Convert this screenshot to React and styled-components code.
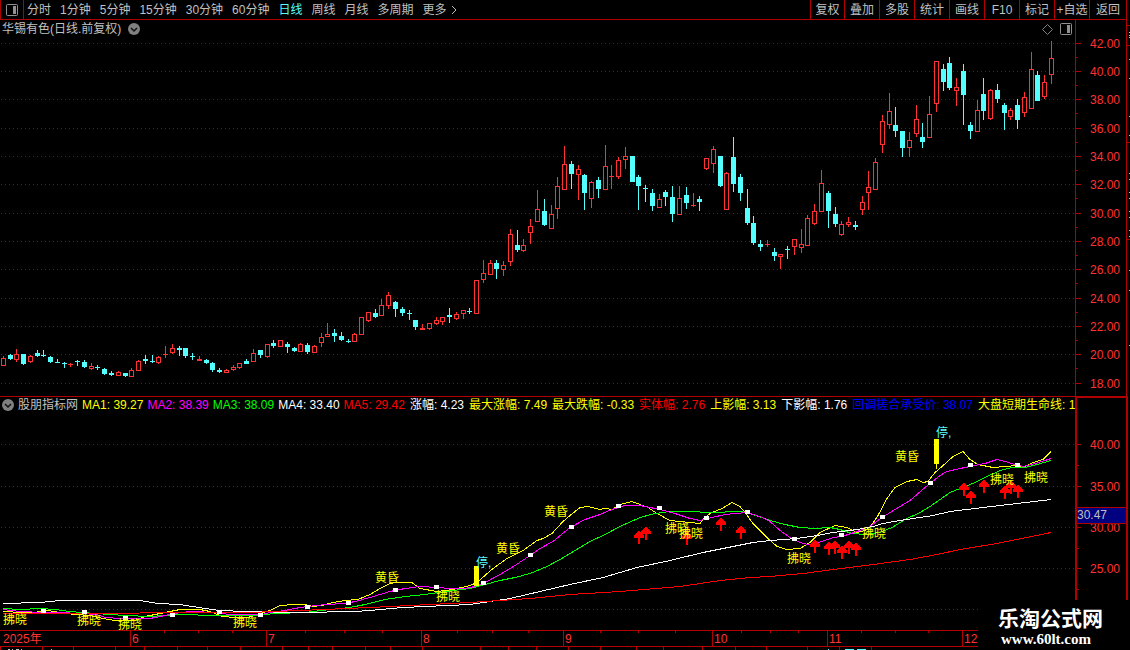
import { useState } from 'react';
import styled, { createGlobalStyle } from 'styled-components';

const RED = '#ff3232';
const CYAN = '#54ffff';
const LINE = '#b00000';

const periods = ['分时', '1分钟', '5分钟', '15分钟', '30分钟', '60分钟', '日线', '周线', '月线', '多周期'];
const tools = ['复权', '叠加', '多股', '统计', '画线', 'F10', '标记', '+自选', '返回'];

// direction (1 up, 0 down), high, body top, body bottom, low
const candles = [
  [1, 356, 358, 366, 366], [0, 354, 355, 359, 360], [1, 349, 354, 360, 362], [0, 354, 354, 364, 365],
  [1, 355, 356, 362, 363], [0, 350, 353, 356, 357], [0, 350, 355, 356, 357], [0, 356, 357, 362, 363],
  [0, 359, 362, 363, 363], [0, 362, 363, 364, 368], [1, 363, 364, 365, 367], [0, 360, 361, 362, 366],
  [0, 360, 362, 367, 368], [1, 363, 366, 369, 370], [0, 365, 367, 368, 370], [0, 368, 369, 374, 375],
  [0, 371, 373, 375, 376], [1, 371, 372, 376, 376], [0, 373, 373, 376, 377], [1, 368, 370, 377, 377],
  [1, 360, 361, 371, 371], [0, 355, 359, 361, 364], [0, 355, 361, 362, 363], [1, 356, 357, 363, 364],
  [1, 346, 354, 355, 358], [1, 344, 348, 353, 354], [0, 346, 348, 350, 356], [0, 348, 348, 356, 358],
  [0, 353, 356, 357, 360], [1, 356, 359, 361, 361], [0, 359, 360, 363, 364], [0, 362, 363, 370, 372],
  [0, 368, 370, 372, 373], [1, 369, 370, 373, 373], [1, 365, 367, 370, 371], [1, 363, 363, 368, 369],
  [0, 359, 361, 364, 364], [1, 349, 353, 362, 362], [0, 350, 350, 355, 358], [1, 344, 344, 357, 358],
  [0, 340, 343, 346, 348], [1, 340, 340, 347, 347], [0, 342, 344, 347, 353], [0, 347, 348, 351, 352],
  [1, 343, 344, 352, 352], [0, 343, 345, 352, 354], [1, 345, 346, 353, 353], [1, 333, 337, 343, 347],
  [1, 323, 334, 337, 337], [0, 329, 333, 336, 342], [0, 332, 336, 340, 341], [0, 339, 341, 342, 343],
  [1, 333, 334, 342, 342], [1, 317, 317, 335, 335], [1, 312, 312, 321, 322], [0, 309, 313, 317, 318],
  [1, 299, 305, 316, 316], [1, 292, 295, 306, 309], [0, 301, 302, 309, 317], [0, 307, 309, 313, 316],
  [0, 310, 313, 314, 320], [0, 320, 320, 327, 330], [1, 324, 328, 330, 330], [1, 323, 323, 329, 330],
  [1, 317, 320, 324, 325], [1, 317, 317, 322, 325], [0, 308, 315, 317, 323], [1, 312, 314, 319, 320],
  [1, 310, 310, 314, 319], [0, 308, 311, 312, 314], [1, 280, 280, 314, 314], [1, 260, 273, 280, 283],
  [1, 260, 263, 275, 275], [0, 260, 263, 269, 279], [1, 261, 265, 270, 276], [1, 229, 234, 262, 266],
  [0, 230, 245, 250, 252], [1, 239, 245, 251, 252], [1, 219, 226, 233, 244], [1, 190, 209, 222, 222],
  [0, 199, 211, 225, 226], [1, 205, 214, 229, 229], [1, 177, 186, 209, 219], [1, 146, 164, 190, 190],
  [0, 161, 164, 174, 189], [1, 165, 169, 175, 200], [0, 174, 175, 193, 210], [1, 181, 182, 199, 208],
  [0, 177, 180, 189, 198], [1, 145, 166, 190, 190], [1, 165, 176, 177, 189], [1, 157, 160, 177, 179],
  [1, 147, 156, 160, 169], [0, 156, 156, 182, 182], [0, 175, 177, 186, 210], [0, 185, 188, 189, 202],
  [0, 189, 193, 206, 211], [1, 194, 199, 208, 208], [0, 190, 192, 197, 206], [0, 186, 197, 214, 222],
  [1, 186, 198, 215, 215], [0, 187, 195, 203, 209], [1, 193, 205, 206, 207], [0, 196, 199, 202, 211],
  [1, 158, 158, 169, 170], [1, 146, 149, 164, 173], [0, 156, 156, 186, 187], [1, 172, 173, 210, 210],
  [0, 137, 157, 184, 192], [0, 174, 177, 193, 201], [0, 189, 208, 223, 225], [0, 216, 223, 243, 245],
  [0, 240, 244, 247, 251], [1, 240, 244, 245, 247], [0, 248, 252, 256, 261], [1, 254, 254, 257, 269],
  [0, 246, 249, 250, 259], [1, 239, 239, 247, 255], [1, 229, 244, 248, 253], [1, 215, 218, 246, 246],
  [1, 204, 211, 224, 225], [1, 170, 183, 212, 212], [0, 191, 193, 211, 228], [0, 207, 214, 224, 227],
  [1, 221, 224, 235, 236], [1, 217, 222, 225, 227], [0, 221, 225, 227, 230], [1, 196, 202, 210, 215],
  [1, 171, 187, 193, 210], [1, 158, 162, 190, 190], [1, 115, 121, 145, 153], [1, 93, 111, 125, 129],
  [0, 107, 125, 131, 137], [0, 131, 131, 148, 157], [1, 132, 140, 148, 157], [1, 105, 119, 134, 137],
  [0, 123, 137, 142, 148], [1, 96, 114, 138, 138], [1, 61, 61, 104, 112], [0, 64, 69, 82, 91],
  [0, 57, 63, 88, 90], [1, 78, 87, 91, 106], [0, 64, 71, 95, 125], [0, 122, 125, 131, 139],
  [1, 100, 110, 132, 132], [0, 78, 94, 111, 120], [1, 89, 90, 119, 120], [0, 84, 90, 99, 103],
  [0, 103, 105, 113, 130], [1, 108, 110, 117, 120], [0, 99, 105, 120, 129], [1, 92, 97, 113, 117],
  [1, 52, 69, 109, 109], [0, 71, 75, 101, 101], [1, 75, 82, 97, 99], [1, 41, 58, 75, 84],
];

const priceGrid = [43, 71, 99, 128, 156, 184, 213, 241, 269, 298, 326, 354, 383];
const indicatorGrid = [444, 486, 527, 568, 609];

const legend = [
  ['MA1', '39.27', '#ffff00'],
  ['MA2', '38.39', '#ff00ff'],
  ['MA3', '38.09', '#00ff00'],
  ['MA4', '33.40', '#ffffff'],
  ['MA5', '29.42', '#ff0000'],
  ['涨幅', '4.23', '#ffffff'],
  ['最大涨幅', '7.49', '#ffff00'],
  ['最大跌幅', '-0.33', '#ffff00'],
  ['实体幅', '2.76', '#ff0000'],
  ['上影幅', '3.13', '#ffff00'],
  ['下影幅', '1.76', '#ffffff'],
  ['回调搓合承受价', '38.07', '#0000ff'],
  ['大盘短期生命线', '11.52', '#ffff00'],
];

const averages = [
  {
    color: '#ffff00',
    points: '3,611 22,612 34,612 48,610 60,612 75,614 90,615 103,618 115,620 135,620 145,616 160,613 170,611 180,609 200,609 210,611 222,616 235,617 248,617 260,613 270,610 280,605 295,604 305,604 313,606 322,605 333,602 345,600 358,599 370,594 380,588 390,583 397,582 412,582 420,588 437,591 453,589 470,585 477,582 493,568 507,558 523,550 537,540 543,538 552,533 563,521 570,515 580,507 588,506 600,509 605,508 612,509 620,504 632,501 640,504 648,507 657,513 670,520 680,521 700,523 703,519 710,513 722,508 732,502 740,506 745,512 753,523 767,537 777,546 787,549 800,548 810,542 820,532 835,525 847,527 857,532 865,530 872,524 878,515 887,498 895,487 907,481 917,479 923,482 928,481 935,472 942,466 953,456 963,451 970,459 978,464 993,467 1017,465 1023,467 1033,462 1043,459 1051,451',
  },
  {
    color: '#00ff00',
    points: '3,608 20,609 40,608 55,609 70,611 95,613 125,615 150,616 165,615 185,614 210,615 235,615 255,615 275,613 305,612 330,609 350,607 365,604 385,599 405,596 425,594 445,591 470,588 485,584 500,580 515,577 530,573 547,566 560,559 575,550 590,541 605,534 620,526 640,517 655,513 670,511 690,511 710,512 740,511 750,513 770,520 785,524 800,527 815,528 830,527 840,529 852,533 865,534 880,532 892,527 905,519 920,512 930,506 940,499 950,492 965,486 975,482 985,477 1000,470 1012,467 1025,467 1037,464 1051,460',
  },
  {
    color: '#ff00ff',
    points: '3,609 20,611 43,612 60,612 80,613 97,614 105,617 120,618 150,618 165,615 180,612 192,611 215,612 230,614 262,614 270,612 285,610 300,607 325,604 345,603 355,601 370,597 390,591 405,588 420,586 437,587 450,588 465,588 475,586 485,582 500,574 515,565 530,555 540,548 553,541 570,527 585,519 600,514 612,509 625,505 640,505 660,509 675,513 690,518 700,520 712,517 725,514 747,512 760,516 770,521 780,530 790,537 800,542 808,544 816,543 830,538 845,535 860,530 870,526 882,517 895,509 910,500 925,487 930,483 940,475 947,471 960,468 970,466 985,463 997,459 1005,461 1015,464 1023,466 1035,463 1045,460 1051,458',
  },
  {
    color: '#ffffff',
    points: '3,603 40,602 60,600 140,600 158,603 180,604 205,608 220,610 245,611 300,612 355,611 370,610 403,607 470,604 510,598 540,591 570,584 603,577 637,567 670,560 703,552 753,542 770,540 797,538 817,535 833,532 857,529 873,526 883,523 900,520 933,515 950,511 983,507 1017,503 1051,499',
  },
  {
    color: '#ff0000',
    points: '3,613 100,613 180,612 250,612 300,610 370,607 410,605 470,602 530,598 570,594 620,591 680,586 720,580 750,577 770,576 803,573 833,569 873,564 910,559 937,554 960,549 997,543 1051,532',
  },
];

const markers = [
  [43, 611], [84, 612], [125, 618], [172, 615], [219, 612], [260, 615], [307, 607], [348, 603], [395, 590],
  [436, 587], [483, 583], [530, 555], [571, 527], [618, 506], [659, 508], [706, 518], [747, 512], [794, 539],
  [841, 535], [882, 517], [930, 483], [970, 465], [1017, 465],
];

const signals = [
  ['黄昏', 375, 577], ['黄昏', 496, 548], ['黄昏', 544, 511], ['黄昏', 895, 456],
  ['拂晓', 3, 619], ['拂晓', 77, 620], ['拂晓', 118, 624], ['拂晓', 233, 622], ['拂晓', 436, 596],
  ['拂晓', 665, 528], ['拂晓', 679, 533], ['拂晓', 787, 558], ['拂晓', 862, 533], ['拂晓', 990, 479],
  ['拂晓', 1024, 477],
];

const arrows = [
  [638, 532], [645, 528], [686, 533], [720, 519], [740, 527], [814, 541], [828, 543], [834, 542], [841, 547],
  [848, 542], [855, 544], [963, 484], [970, 492], [983, 481], [1004, 487], [1010, 482], [1017, 486],
];

const months = [['2025年', 1], ['6', 130], ['7', 266], ['8', 421], ['9', 563], ['10', 712], ['11', 827], ['12', 962]];
const weekTicks = [164, 198, 232, 305, 344, 382, 457, 492, 528, 600, 638, 675, 741, 770, 798, 861, 895, 928];
const lowerTicks = [0, 42, 73, 115, 144, 177, 207, 240, 282, 308, 332, 365, 390, 422, 480, 508, 536, 568, 600, 636, 663, 702, 735, 766, 807, 839, 871];
const sideMarks = [32, 35, 37, 59, 78, 116, 135, 173, 179, 192, 198, 211, 217, 230, 236, 270, 290, 345];

function CollapseIcon() {
  return (
    <svg width="12" height="12" viewBox="0 0 12 12" aria-hidden="true">
      <circle cx="6" cy="6" r="6" fill="#808080" />
      <path d="M3 5l3 3 3-3" fill="none" stroke="#101010" strokeWidth="1.5" />
    </svg>
  );
}

function PaneIcon() {
  return (
    <svg width="12" height="12" viewBox="0 0 12 12" aria-hidden="true">
      <rect x="0.5" y="0.5" width="11" height="11" rx="1" fill="none" stroke="#909090" />
      <rect x="7" y="2" width="3" height="8" fill="#909090" />
    </svg>
  );
}

function Candle({ index, data }) {
  const [up, high, top, bottom, low] = data;
  const x = Math.floor(3.3 + index * 6.762);
  const color = up ? RED : CYAN;

  if (!up || bottom - top < 3) {
    return (
      <g fill={color}>
        <rect x={x} y={high} width="1" height={low - high} />
        <rect x={x - 2} y={top} width="5" height={bottom - top} />
      </g>
    );
  }

  return (
    <g>
      <rect x={x} y={high} width="1" height={top - high} fill={color} />
      <rect x={x} y={bottom} width="1" height={low - bottom} fill={color} />
      <rect x={x - 1.5} y={top + 0.5} width="4" height={bottom - top - 1} fill="#000" stroke={color} />
    </g>
  );
}

function Grid({ rows }) {
  return rows.map(y => (
    <line key={y} x1="1" x2="1075" y1={y + 0.5} y2={y + 0.5} stroke="#a00000" strokeDasharray="1 3" />
  ));
}

function PriceChart() {
  return (
    <Chart viewBox="0 38 1126 358" role="img" aria-label="日线">
      <g shapeRendering="crispEdges">
        <Grid rows={priceGrid} />
        {candles.map((data, i) => <Candle key={i} index={i} data={data} />)}
        <rect x="1075" y="38" width="1" height="358" fill={LINE} />
        {priceGrid.map(y => <rect key={y} x="1076" y={y} width="5" height="1" fill={LINE} />)}
        {priceGrid.slice(0, -1).map(y => <rect key={y} x="1076" y={y + 14} width="2" height="1" fill={LINE} />)}
      </g>
      {priceGrid.map((y, i) => (
        <text key={y} x="1090" y={y + 5} fill={RED}>{(42 - i * 2).toFixed(2)}</text>
      ))}
    </Chart>
  );
}

function IndicatorChart() {
  return (
    <Chart viewBox="0 413 1126 217" role="img" aria-label="股朋指标网">
      <g shapeRendering="crispEdges">
        <Grid rows={indicatorGrid} />
        {averages.map(({ color, points }) => (
          <polyline key={color} points={points} fill="none" stroke={color} transform="translate(0 0.5)" />
        ))}
        <path d="M474 566h5v20h-5zM934 439h5v25h-5zM936 464h1v5h-1z" fill="#ffff00" />
        {markers.map(([x, y]) => <rect key={x} x={x - 2} y={y - 2} width="5" height="4" fill="#fff" />)}
        {arrows.map(([x, y]) => (
          <path key={x} d={`M${x} ${y - 1}h2l4 5v2h-4v6h-2v-6h-4v-2z`} fill="#ff0000" />
        ))}
        <rect x="1075" y="413" width="2" height="217" fill={LINE} />
        {indicatorGrid.map(y => <rect key={y} x="1077" y={y} width="4" height="1" fill={LINE} />)}
        {indicatorGrid.map(y => <rect key={y} x="1077" y={y + 21} width="2" height="1" fill={LINE} />)}
      </g>
      {signals.map(([label, x, y]) => (
        <text key={x} x={x} y={y + 5} fill="#ffff00">{label}</text>
      ))}
      <text x="476" y="567" fill={CYAN}>停,</text>
      <text x="936" y="437" fill={CYAN}>停,</text>
      {indicatorGrid.slice(0, 4).map((y, i) => (
        <text key={y} x="1090" y={y + 5} fill={RED}>{(40 - i * 5).toFixed(2)}</text>
      ))}
      <rect x="1077" y="507" width="49" height="17" fill={LINE} />
      <rect x="1077" y="508" width="49" height="15" fill="#000080" />
      <text x="1077" y="519" fill="#c0c0c0">30.47</text>
    </Chart>
  );
}

function TimeAxis() {
  return (
    <Chart viewBox="0 630 1126 20" role="img" aria-label="2025年">
      <g shapeRendering="crispEdges" fill={LINE}>
        <rect x="0" y="630" width="1126" height="1" />
        <rect x="0" y="646" width="1126" height="1" />
        {months.slice(1).map(([label, x]) => <rect key={label} x={x} y="630" width="1" height="16" />)}
        {weekTicks.map(x => <rect key={x} x={x} y="631" width="1" height="2" />)}
        {lowerTicks.map(x => <rect key={x} x={x} y="647" width="1" height="3" />)}
        <path d="M8 649h2v1h-2zM12 649h1v1h-1zM16 649h3v1h-3zM21 649h1v1h-1zM51 649h1v1h-1z" fill="#c0c0c0" />
        <path d="M828 649h1v1h-1zM845 649h9v1h-9zM857 649h9v1h-9z" fill={CYAN} />
      </g>
      {months.map(([label, x]) => (
        <text key={label} x={x + 2} y="643" fill={RED}>{label}</text>
      ))}
    </Chart>
  );
}

export default function App() {
  const [period, setPeriod] = useState('日线');

  return (
    <Page>
      <GlobalStyle />
      <Row>
        <Toolbar>
          <PaneButton aria-label="侧栏"><PaneIcon /></PaneButton>
          <Periods>
            {periods.map(name => (
              <PeriodButton key={name} $active={name === period} onClick={() => setPeriod(name)}>{name}</PeriodButton>
            ))}
            <PeriodButton>
              更多
              <svg width="6" height="10" viewBox="0 0 6 10" aria-hidden="true">
                <path d="M1 1l4 4-4 4" fill="none" stroke="currentColor" />
              </svg>
            </PeriodButton>
          </Periods>
          <Tools>
            {tools.map(name => <ToolButton key={name}>{name}</ToolButton>)}
          </Tools>
        </Toolbar>
        <Gutter />
      </Row>

      <Row>
        <Panel>
          <PriceHeader>
            <Title>华锡有色(日线.前复权)</Title>
            <IconButton aria-label="展开"><CollapseIcon /></IconButton>
            <HeaderIcons>
              <svg width="11" height="11" viewBox="0 0 11 11" aria-hidden="true">
                <path d="M5.5 0.5l5 5-5 5-5-5z" fill="none" stroke="#808080" />
              </svg>
              <PaneIcon />
            </HeaderIcons>
            <AxisHead />
          </PriceHeader>
          <PriceChart />
        </Panel>
        <Gutter>
          <svg width="3" height="376" viewBox="0 20 3 376" shapeRendering="crispEdges" aria-hidden="true">
            {sideMarks.map(y => <rect key={y} x="2" y={y} width="1" height="1" fill="#c0c0c0" />)}
            {[25, 45, 142, 239].map(y => <rect key={y} x="0" y={y} width="3" height="1" fill={LINE} />)}
          </svg>
        </Gutter>
      </Row>

      <Row>
        <IndicatorPanel>
          <IndicatorHeader>
            <IconButton aria-label="收起"><CollapseIcon /></IconButton>
            <Legend>
              <LegendItem $color="#c0c0c0" $wide>股朋指标网</LegendItem>
              {legend.map(([name, value, color]) => (
                <LegendItem key={name} $color={color} $wide={!name.startsWith('MA')}>{name}: {value}</LegendItem>
              ))}
            </Legend>
            <AxisHead $heavy />
          </IndicatorHeader>
          <IndicatorChart />
          <TimeAxis />
        </IndicatorPanel>
        <Gutter $heavy />
      </Row>

      <Watermark>
        <strong>乐淘公式网</strong>
        <span>www.60lt.com</span>
      </Watermark>
    </Page>
  );
}

const GlobalStyle = createGlobalStyle`
  body {
    margin: 0;
    background: #000;
  }

  button {
    font: inherit;
    color: inherit;
    background: none;
    border: 0;
    padding: 0;
    cursor: pointer;
  }
`;

const Page = styled.div`
  position: relative;
  overflow: hidden;
  background: #000;
  color: #c0c0c0;
  font-family: 'Liberation Sans', 'Noto Sans CJK SC', sans-serif;
  font-size: 12px;
  line-height: 16px;
`;

const Row = styled.div`
  display: grid;
  grid-template-columns: minmax(0, 1fr) 4px;
`;

const Gutter = styled.div`
  box-sizing: border-box;
  border-left: ${({ $heavy }) => ($heavy ? 2 : 1)}px solid ${LINE};
  overflow: hidden;

  svg {
    display: block;
  }
`;

const Toolbar = styled.header`
  display: flex;
  height: 19px;
  border-bottom: 1px solid ${LINE};
  white-space: nowrap;
`;

const PaneButton = styled.button`
  box-sizing: border-box;
  width: 24px;
  display: flex;
  align-items: center;
  justify-content: center;
  border-left: 1px solid ${LINE};
  border-right: 1px solid ${LINE};
`;

const Periods = styled.nav`
  flex: 1;
  display: flex;
  align-items: center;
  gap: 9px;
  padding-left: 3px;
  overflow: hidden;
`;

const PeriodButton = styled.button`
  display: flex;
  align-items: center;
  gap: 4px;
  color: ${({ $active }) => ($active ? CYAN : '#c0c0c0')};
`;

const Tools = styled.div`
  display: flex;
`;

const ToolButton = styled.button`
  box-sizing: border-box;
  width: 35px;
  border-left: 1px solid ${LINE};

  &:first-child {
    width: 34px;
  }

  &:last-child {
    width: 37px;
  }
`;

const Panel = styled.section`
  min-width: 0;
`;

const IndicatorPanel = styled(Panel)`
  border-top: 1px solid ${LINE};
`;

const PriceHeader = styled.div`
  display: flex;
  align-items: center;
  height: 18px;
  padding-left: 2px;
  gap: 7px;
`;

const Title = styled.h1`
  margin: 0;
  font-size: 12px;
  font-weight: 400;
`;

const IconButton = styled.button`
  display: flex;
`;

const HeaderIcons = styled.div`
  display: flex;
  align-items: center;
  gap: 7px;
  margin-left: auto;
  margin-right: -4px;
`;

const AxisHead = styled.div`
  box-sizing: border-box;
  flex: none;
  align-self: stretch;
  width: 51px;
  border-left: ${({ $heavy }) => ($heavy ? 2 : 1)}px solid ${LINE};
  border-top: ${({ $heavy }) => ($heavy ? 1 : 0)}px solid ${LINE};
`;

const IndicatorHeader = styled.div`
  display: flex;
  align-items: center;
  height: 16px;
  padding-left: 2px;
  gap: 3px;
`;

const Legend = styled.div`
  flex: 1;
  min-width: 0;
  display: flex;
  gap: 4px;
  margin-right: -3px;
  overflow: hidden;
  white-space: nowrap;
`;

const LegendItem = styled.span`
  flex: none;
  padding-left: ${({ $wide }) => ($wide ? 1 : 0)}px;
  color: ${({ $color }) => $color};
`;

const Chart = styled.svg`
  display: block;
  width: 100%;
  height: auto;
  font-family: 'Liberation Sans', 'Noto Sans CJK SC', sans-serif;
  font-size: 12px;
`;

/* Sits over the lower right corner of the chart */
const Watermark = styled.footer`
  position: absolute;
  right: 0;
  bottom: 0;
  box-sizing: border-box;
  width: 152px;
  height: 50px;
  padding: 8px 0 0 20px;
  display: flex;
  flex-direction: column;
  background: #000;
  color: #fff;

  strong {
    font-size: 21px;
    line-height: 22px;
  }

  span {
    padding-left: 3px;
    font-family: 'Liberation Serif', serif;
    font-size: 15px;
    font-weight: 700;
    line-height: 18px;
  }
`;
